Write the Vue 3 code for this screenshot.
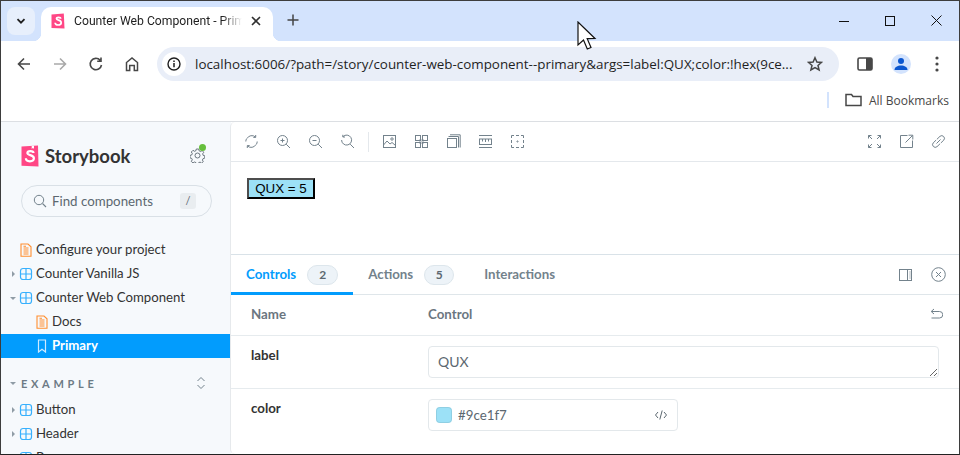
<script setup>
const zoomTools = [
  '<path d="M3 4.500A5.500 5.500 0 0 1 11.500 3M12 10.500A5.500 5.500 0 0 1 3.500 12M11.700 1v2.400H9.300M3.300 14v-2.400h2.400M1.800 7.500c0-1 .3-2 .8-2.800M13.200 7.500c0 1-.3 2-.8 2.800"/>',
  '<circle cx="6.500" cy="6.500" r="5"/><path d="M10.200 10.200 14 14M4.500 6.500h4M6.500 4.500v4"/>',
  '<circle cx="6.500" cy="6.500" r="5"/><path d="M10.200 10.200 14 14M4.500 6.500h4"/>',
  '<path d="M3 2.600A5 5 0 1 1 1.600 6M10.200 10.200 14 14M2.800 .8v2.200H5"/>',
]
const viewTools = [
  '<rect x="1.500" y="1.500" width="12" height="12"/><circle cx="10" cy="5" r="1.200"/><path d="M1.500 11 5 7l3 3 2-1.500 3.500 3"/>',
  '<rect x="1.500" y="1.500" width="5" height="5"/><rect x="8.500" y="1.500" width="5" height="5"/><rect x="1.500" y="8.500" width="5" height="5"/><rect x="8.500" y="8.500" width="5" height="5"/><rect x="5" y="5" width="5" height="5" fill="#73828c" fill-opacity=".35" stroke="none"/>',
  '<rect x="1.500" y="4.500" width="9" height="9"/><path d="M2.500 2.500h10v11M4 .8h10.200V13.500"/>',
  '<path d="M1 1.500h13M1 13.500h13"/><rect x="1.500" y="5" width="12" height="5.500"/><path d="M4.500 5v2.500M7.500 5v3M10.500 5v2.500"/>',
  '<path d="M1.500 4V1.500H4M11 1.500h2.500V4M13.500 11v2.500H11M4 13.500H1.500V11M6 1.500h3M6 13.500h3M1.500 6v3M13.500 6v3"/><circle cx="7.500" cy="7.500" r=".6"/>',
]
const rightTools = [
  '<path d="M1.500 1.500 5 5M13.500 1.500 10 5M1.500 13.500 5 10M13.500 13.500 10 10M1.500 4.500v-3h3M10.500 1.500h3v3M1.500 10.500v3h3M10.500 13.500h3v-3"/>',
  '<path d="M8.500 1.500h-7v12h12v-7M6.500 8.500l7-7M9.500 1.200h4.300v4.300"/>',
  '<path d="M6 5.200 9 2.300a2.700 2.700 0 0 1 3.800 3.800L9.800 9M9 9.800l-3 2.900a2.700 2.700 0 0 1-3.800-3.800L5.200 6M5.500 9.500l4-4"/>',
]
const topItems = [
  { name: 'Configure your project', kind: 'doc', depth: 0 },
  { name: 'Counter Vanilla JS', kind: 'comp', arrow: 'right', depth: 0 },
  { name: 'Counter Web Component', kind: 'comp', arrow: 'down', depth: 0 },
  { name: 'Docs', kind: 'doc', depth: 1 },
  { name: 'Primary', kind: 'story', depth: 1, selected: true },
]
const exampleItems = [
  { name: 'Button', kind: 'comp', arrow: 'right', depth: 0 },
  { name: 'Header', kind: 'comp', arrow: 'right', depth: 0 },
  { name: 'Page', kind: 'comp', arrow: 'right', depth: 0 },
]
</script>

<template>
  <div class="window">
    <div class="tabstrip">
      <button class="tab-search">
        <svg width="12" height="12" viewBox="0 0 12 12"><path d="M2.500 4.200 6 7.700l3.500-3.500" fill="none" stroke="#1f1f1f" stroke-width="1.800"/></svg>
      </button>
      <div class="tab">
        <svg class="favicon" width="14" height="16" viewBox="0 0 14 16">
          <path d="M.5 1.500 12.800.5 13.500 15.500.5 15z" fill="#ff4785"/>
          <path d="M9.700 5.800c0-1-.8-1.400-2.200-1.400-1.300 0-2 .5-2 1.300 0 1.900 4.700 1 4.700 4 0 1.500-1.300 2.300-3.100 2.300-1.700 0-3-.7-3-2.200" fill="none" stroke="#fff" stroke-width="1.700"/>
        </svg>
        <span class="tab-title">Counter Web Component - Primary</span>
        <svg class="tab-close" width="10" height="10" viewBox="0 0 10 10"><path d="M1 1l8 8M9 1 1 9" stroke="#303030" stroke-width="1.600"/></svg>
      </div>
      <svg class="new-tab" width="12" height="12" viewBox="0 0 12 12"><path d="M6 .5v11M.5 6h11" stroke="#444" stroke-width="1.500"/></svg>
      <div class="tabstrip-fill"></div>
      <div class="win-btn"><svg width="10" height="10" viewBox="0 0 10 10"><path d="M0 5.500h10" stroke="#111" /></svg></div>
      <div class="win-btn"><svg width="10" height="10" viewBox="0 0 10 10"><rect x=".5" y=".5" width="9" height="9" fill="none" stroke="#111"/></svg></div>
      <div class="win-btn"><svg width="11" height="11" viewBox="0 0 11 11"><path d="M.5.500l10 10M10.500.500l-10 10" stroke="#111"/></svg></div>
    </div>

    <div class="chrome-toolbar">
      <svg class="nav" width="16" height="16" viewBox="0 0 16 16"><path d="M14 8H2.500M8 2.500 2.500 8 8 13.500" fill="none" stroke="#474747" stroke-width="1.600"/></svg>
      <svg class="nav" width="16" height="16" viewBox="0 0 16 16"><path d="M2 8h11.500M8 2.500 13.500 8 8 13.500" fill="none" stroke="#a9a9a9" stroke-width="1.600"/></svg>
      <svg class="nav" width="16" height="16" viewBox="0 0 16 16"><path d="M13.500 9a5.700 5.700 0 1 1-1.300-4.700M13 1.500v3.800H9.200" fill="none" stroke="#474747" stroke-width="1.600"/></svg>
      <svg class="nav" width="16" height="16" viewBox="0 0 16 16"><path d="M2.500 14.500V6.500L8 2l5.500 4.500v8h-3.200V9.500H5.700v5z" fill="none" stroke="#474747" stroke-width="1.500"/></svg>
      <div class="omnibox">
        <div class="site-info">
          <svg width="14" height="14" viewBox="0 0 14 14"><circle cx="7" cy="7" r="6" fill="none" stroke="#1f1f1f" stroke-width="1.400"/><path d="M7 6v4.300M7 3.500v1.400" stroke="#1f1f1f" stroke-width="1.500"/></svg>
        </div>
        <span class="url">localhost:6006/?path=/story/counter-web-component--primary&amp;args=label:QUX;color:!hex(9ce...</span>
        <svg width="16" height="16" viewBox="0 0 16 16"><path d="M8 1.700 9.900 6l4.600.4-3.500 3 1.100 4.600L8 11.600 3.900 14 5 9.400l-3.500-3L6.100 6z" fill="none" stroke="#474747" stroke-width="1.500"/></svg>
      </div>
      <svg class="side-panel" width="16" height="14" viewBox="0 0 16 14"><rect x="1" y="1" width="14" height="12" rx="1.500" fill="none" stroke="#474747" stroke-width="1.600"/><rect x="9" y="1" width="6" height="12" fill="#474747"/></svg>
      <div class="avatar">
        <svg width="14" height="14" viewBox="0 0 14 14"><circle cx="7" cy="4" r="3" fill="#0b57d0"/><path d="M.5 13c0-3 3-4.500 6.500-4.500s6.500 1.500 6.500 4.500z" fill="#0b57d0"/></svg>
      </div>
      <svg class="kebab" width="4" height="16" viewBox="0 0 4 16"><circle cx="2" cy="2" r="1.600" fill="#474747"/><circle cx="2" cy="8" r="1.600" fill="#474747"/><circle cx="2" cy="14" r="1.600" fill="#474747"/></svg>
    </div>

    <div class="bookmarks">
      <div class="bm-sep"></div>
      <svg width="17" height="14" viewBox="0 0 17 14"><path d="M1 12.500V1.500h5.500l1.500 2h8v9z" fill="none" stroke="#474747" stroke-width="1.500"/></svg>
      <span class="bm-label">All Bookmarks</span>
    </div>

    <div class="storybook">
      <aside class="sidebar">
        <div class="brand">
          <svg width="18" height="22" viewBox="0 0 18 22">
            <path d="M.5 1.500 17 .5 17.500 21.500.5 20.800z" fill="#ff4785"/>
            <path d="M12.500 8c0-1.300-1.200-1.800-3.200-1.800-1.800 0-2.900.7-2.900 1.800 0 2.800 6.500 1.400 6.500 5.300 0 2-1.700 3-4 3-2.400 0-4-1-4-3" fill="none" stroke="#fff" stroke-width="2.200"/>
            <path d="M13 .8v3l-1.200-.8-1.100.9V1z" fill="#fff"/>
          </svg>
          <span class="brand-name">Storybook</span>
          <div class="gear">
            <svg width="15" height="15" viewBox="0 0 15 15"><path d="M6.300 1h2.400l.4 1.800 1.500.7 1.600-1 1.500 1.800-1 1.500.4 1.500 1.700.5v2.300l-1.700.5-.7 1.500.9 1.500-1.700 1.500-1.500-1-1.500.6-.4 1.600H6.300l-.4-1.700-1.400-.6-1.600 1-1.600-1.700 1-1.500-.6-1.400-1.700-.5V7.400l1.700-.4.600-1.500-1-1.500L3 2.300l1.500 1 1.400-.6zM7.500 5a2.500 2.500 0 1 0 0 5 2.500 2.500 0 0 0 0-5z" fill="none" stroke="#5c6870" stroke-width=".9"/></svg>
            <span class="status-dot"></span>
          </div>
        </div>

        <div class="search">
          <svg width="14" height="14" viewBox="0 0 14 14"><circle cx="6" cy="6" r="4.700" fill="none" stroke="#73828c"/><path d="M9.500 9.500 13 13" stroke="#73828c" stroke-width="1.100"/></svg>
          <span class="search-text">Find components</span>
          <span class="search-key">/</span>
        </div>

        <div class="tree top-tree">
          <div v-for="item in topItems" :key="item.name" :class="['row', { selected: item.selected, nested: item.depth }]">
            <span class="caret">
              <span v-if="item.arrow" :class="['arrow', item.arrow]"></span>
            </span>
            <svg v-if="item.kind === 'doc'" width="14" height="14" viewBox="0 0 14 14"><path d="M2 1h7l3 2.800v9.400H2zM4.500 5h5M4.500 7h5M4.500 9h5M4.500 11h5M4.500 3.200h2.500" fill="none" stroke="#ff8e2e" stroke-width="1.100"/></svg>
            <svg v-else-if="item.kind === 'comp'" width="14" height="14" viewBox="0 0 14 14"><rect x="1.500" y="1.500" width="11" height="11" rx="2.500" fill="none" stroke="#37b0fd" stroke-width="1.200"/><path d="M7 1.500v11M1.500 7h11" stroke="#37b0fd" stroke-width="1.200"/></svg>
            <svg v-else width="14" height="14" viewBox="0 0 14 14"><path d="M3.500 1h7v12L7 10.200 3.500 13z" fill="none" stroke="#cfeaff" stroke-width="1.200"/></svg>
            <span class="row-name">{{ item.name }}</span>
          </div>
        </div>

        <div class="section-head">
          <span class="arrow down"></span>
          <span class="section-title">EXAMPLE</span>
          <svg width="10" height="14" viewBox="0 0 10 14"><path d="M1.500 5 5 1.500 8.500 5M1.500 9 5 12.500 8.500 9" fill="none" stroke="#73828c"/></svg>
        </div>

        <div class="tree">
          <div v-for="item in exampleItems" :key="item.name" class="row">
            <span class="caret"><span class="arrow right"></span></span>
            <svg width="14" height="14" viewBox="0 0 14 14"><rect x="1.500" y="1.500" width="11" height="11" rx="2.500" fill="none" stroke="#37b0fd" stroke-width="1.200"/><path d="M7 1.500v11M1.500 7h11" stroke="#37b0fd" stroke-width="1.200"/></svg>
            <span class="row-name">{{ item.name }}</span>
          </div>
        </div>
      </aside>

      <main class="main">
        <div class="sb-toolbar">
          <svg v-for="(icon, i) in zoomTools" :key="i" class="tool" width="15" height="15" viewBox="0 0 15 15" v-html="icon"></svg>
          <span class="tool-sep"></span>
          <svg v-for="(icon, i) in viewTools" :key="'v' + i" class="tool" width="15" height="15" viewBox="0 0 15 15" v-html="icon"></svg>
          <span class="toolbar-fill"></span>
          <svg v-for="(icon, i) in rightTools" :key="'r' + i" class="tool" width="15" height="15" viewBox="0 0 15 15" v-html="icon"></svg>
        </div>

        <div class="preview">
          <button class="counter">QUX = 5</button>
        </div>

        <div class="panel">
          <div class="panel-tabs">
            <div class="ptab active"><span class="ptab-name">Controls</span> <span class="count">2</span></div>
            <div class="ptab"><span class="ptab-name">Actions</span> <span class="count">5</span></div>
            <div class="ptab"><span class="ptab-name">Interactions</span></div>
            <span class="toolbar-fill"></span>
            <svg class="panel-icon" width="14" height="14" viewBox="0 0 14 14"><rect x=".5" y="1.500" width="12" height="11" fill="none" stroke="#73828c"/><path d="M8.500 1.500v11M10.500 4h1M10.500 6h1M10.500 8h1M10.500 10h1" stroke="#73828c"/></svg>
            <svg class="panel-icon close" width="15" height="15" viewBox="0 0 15 15"><circle cx="7.500" cy="7.500" r="6.800" fill="none" stroke="#73828c"/><path d="M5 5l5 5M10 5l-5 5" stroke="#73828c"/></svg>
          </div>

          <div class="args-row head">
            <span class="col-name">Name</span>
            <span class="col-control">Control</span>
            <svg class="reset" width="13" height="13" viewBox="0 0 13 13"><path d="M4 1 1.200 3.500 4 6M1.500 3.500h8a2.800 2.800 0 0 1 0 6.500H1.500" fill="none" stroke="#73828c"/></svg>
          </div>
          <div class="args-row text-row">
            <span class="col-name">label</span>
            <div class="col-control"><div class="text-input">QUX</div></div>
          </div>
          <div class="args-row color-row">
            <span class="col-name">color</span>
            <div class="col-control">
              <div class="color-input">
                <span class="swatch"></span>
                <span class="color-value">#9ce1f7</span>
                <svg width="14" height="14" viewBox="0 0 14 14"><path d="M4 4 1.500 7 4 10M10 4l2.500 3L10 10M8.200 2.500l-2.400 9" fill="none" stroke="#5c6870"/></svg>
              </div>
            </div>
          </div>
        </div>
      </main>
    </div>

    <svg class="cursor" width="20" height="29" viewBox="0 0 20 29"><path d="M1 1v23l5.500-5 3.800 9 3.700-1.500-3.800-8.800 7.800-.2z" fill="#fff" stroke="#111" stroke-width="1.200"/></svg>
  </div>
</template>

<style scoped>
.window {
  position: relative;
  width: 960px;
  height: 455px;
  box-sizing: border-box;
  border: 1px solid #3d3d3d;
  border-bottom-color: #222;
  background: #fff;
  overflow: hidden;
  display: flex;
  flex-direction: column;
  font-family: "Open Sans", "Noto Sans", sans-serif;
}

/* browser chrome */
.tabstrip {
  height: 40px;
  flex: none;
  background: #d3e3fd;
  display: flex;
  align-items: flex-end;
  padding-left: 6px;
}

.tab-search {
  width: 28px;
  height: 28px;
  margin-bottom: 6px;
  border: none;
  padding: 0;
  border-radius: 8px;
  background: #e7effc;
  display: flex;
  align-items: center;
  justify-content: center;
}

.tab {
  position: relative;
  width: 232px;
  height: 34px;
  margin-left: 6px;
  background: #fff;
  border-radius: 10px 10px 0 0;
  display: flex;
  align-items: center;
  padding: 0 0 6px 10px;
  box-sizing: border-box;
}

.tab::before,
.tab::after {
  content: "";
  position: absolute;
  bottom: 0;
  width: 8px;
  height: 8px;
}

.tab::before {
  left: -8px;
  background: radial-gradient(circle at 0 0, transparent 8px, #fff 8.500px);
}

.tab::after {
  right: -8px;
  background: radial-gradient(circle at 100% 0, transparent 8px, #fff 8.500px);
}

.favicon {
  flex: none;
}

.tab-title {
  margin-left: 9px;
  width: 168px;
  flex: none;
  white-space: nowrap;
  overflow: hidden;
  font-family: Roboto, "Open Sans", sans-serif;
  font-size: 12.200px;
  color: #1f1f1f;
  -webkit-mask-image: linear-gradient(to right, #000 88%, transparent);
  mask-image: linear-gradient(to right, #000 88%, transparent);
}

.tab-close {
  margin-left: 9px;
}

.new-tab {
  margin: 0 0 15px 14px;
}

.tabstrip-fill,
.toolbar-fill {
  flex: 1;
}

.win-btn {
  width: 46px;
  height: 39px;
  display: flex;
  align-items: center;
  justify-content: center;
  margin-bottom: 1px;
}

.chrome-toolbar {
  height: 46px;
  flex: none;
  background: #fff;
  border-radius: 8px 8px 0 0;
  display: flex;
  align-items: center;
  padding: 0 0 0 15px;
  box-sizing: border-box;
}

.nav {
  margin-right: 20px;
  flex: none;
}

.nav:nth-child(4) {
  margin-right: 18px;
}

.omnibox {
  width: 682px;
  height: 34px;
  margin-left: -1px;
  background: #e9eef8;
  border-radius: 17px;
  display: flex;
  align-items: center;
  padding: 0 16px 0 5px;
  box-sizing: border-box;
  flex: none;
}

.site-info {
  width: 24px;
  height: 24px;
  border-radius: 50%;
  background: #fff;
  display: flex;
  align-items: center;
  justify-content: center;
  flex: none;
}

.url {
  margin-left: 9px;
  flex: 1;
  font-size: 13.400px;
  color: #1f1f1f;
  white-space: nowrap;
  overflow: hidden;
}

.side-panel {
  margin-left: 18px;
}

.avatar {
  width: 20px;
  height: 20px;
  margin-left: 18px;
  border-radius: 50%;
  background: #d3e3fd;
  display: flex;
  align-items: center;
  justify-content: center;
}

.kebab {
  margin-left: 24px;
}

.bookmarks {
  height: 34px;
  flex: none;
  background: #fff;
  display: flex;
  align-items: center;
  padding: 0 0 8px 826px;
  box-sizing: border-box;
}

.bm-sep {
  width: 2px;
  height: 16px;
  background: #d3e3fd;
  margin-right: 16px;
}

.bm-label {
  margin-left: 7px;
  font-size: 12px;
  color: #474747;
  white-space: nowrap;
}

/* storybook */
.storybook {
  flex: 1;
  min-height: 0;
  display: flex;
  border-top: 1px solid #dcdfe3;
  font-family: Lato, "Noto Sans", sans-serif;
}

.sidebar {
  width: 230px;
  flex: none;
  background: #f6f9fc;
  overflow: hidden;
}

.brand {
  height: 22px;
  margin-top: 23px;
  padding: 0 26px 0 20px;
  display: flex;
  align-items: center;
}

.brand-name {
  margin-left: 6px;
  flex: 1;
  font-size: 18.500px;
  font-weight: 700;
  color: #333;
}

.gear {
  position: relative;
  width: 15px;
  height: 15px;
  margin-top: -3px;
}

.status-dot {
  position: absolute;
  top: -3px;
  right: -1px;
  width: 7px;
  height: 7px;
  border-radius: 50%;
  background: #66bf3c;
}

.search {
  height: 32px;
  margin: 18px 19px 0 20px;
  padding: 0 15px 0 11px;
  border: 1px solid #d9e0e6;
  border-radius: 16px;
  display: flex;
  align-items: center;
  box-sizing: border-box;
}

.search-text {
  margin-left: 5px;
  flex: 1;
  font-size: 13.300px;
  color: #5c6870;
  padding-bottom: 1px;
}

.search-key {
  width: 16px;
  height: 16px;
  border-radius: 3px;
  background: #e9edf0;
  color: #5c6870;
  font-size: 11px;
  line-height: 16px;
  text-align: center;
}

.top-tree {
  margin-top: 21px;
}

.row {
  height: 24px;
  display: flex;
  align-items: center;
  padding-left: 7px;
  font-size: 13.200px;
  color: #333;
  white-space: nowrap;
}

.row.nested {
  padding-left: 23px;
}

.row.selected {
  background: #029cfd;
  color: #fff;
  font-weight: 700;
}

.caret {
  width: 10px;
  display: flex;
  justify-content: center;
  flex: none;
}

.row svg {
  margin-left: 1px;
  flex: none;
}

.row-name {
  margin-left: 3px;
  padding-bottom: 2px;
}

.arrow {
  display: block;
  width: 0;
  height: 0;
}

.arrow.right {
  border-left: 3px solid #8f9ca5;
  border-top: 3px solid transparent;
  border-bottom: 3px solid transparent;
}

.arrow.down {
  border-top: 3px solid #8f9ca5;
  border-left: 3px solid transparent;
  border-right: 3px solid transparent;
}

.section-head {
  height: 24px;
  margin: 13px 0 3px;
  padding: 0 25px 0 9px;
  display: flex;
  align-items: center;
}

.section-title {
  flex: 1;
  margin-left: 5px;
  font-size: 11px;
  font-weight: 700;
  letter-spacing: 3.700px;
  color: #6d7b85;
}

.main {
  flex: 1;
  min-width: 0;
  display: flex;
  flex-direction: column;
  border-left: 1px solid #e6e9ec;
  border-radius: 5px 0 0 5px;
  background: #fff;
  margin-left: -1px;
  box-sizing: border-box;
}

.sb-toolbar {
  height: 40px;
  flex: none;
  border-bottom: 1px solid #e4e8ec;
  box-sizing: border-box;
  display: flex;
  align-items: center;
  padding: 0 13px 0 13px;
  gap: 17px;
}

.tool {
  flex: none;
  fill: none;
  stroke: #73828c;
  stroke-width: 1;
}

.tool-sep {
  width: 1px;
  height: 20px;
  background: #e4e8ec;
  margin: 0 -4px;
}

.preview {
  height: 92px;
  flex: none;
  padding: 16px;
  box-sizing: border-box;
}

.counter {
  display: block;
  width: 68px;
  height: 21px;
  padding: 0;
  background: #9ce1f7;
  border: 2px solid;
  border-color: #4d4d4d #000 #000 #4d4d4d;
  font-family: "Liberation Sans", Arial, sans-serif;
  font-size: 13.333px;
  color: #000;
}

.panel {
  flex: 1;
  min-height: 0;
  border-top: 1px solid #d9e2e8;
  display: flex;
  flex-direction: column;
}

.panel-tabs {
  height: 40px;
  flex: none;
  border-bottom: 1px solid #dfe6ea;
  box-sizing: border-box;
  display: flex;
  align-items: stretch;
}

.ptab {
  display: flex;
  align-items: center;
  padding: 0 15px;
  font-size: 13.300px;
  font-weight: 700;
  color: #73828c;
  white-space: nowrap;
  position: relative;
}

.ptab-name {
  padding-bottom: 2px;
}

.ptab.active {
  color: #029cfd;
}

.ptab.active::after {
  content: "";
  position: absolute;
  left: 0;
  right: 0;
  bottom: -1px;
  height: 3px;
  background: #029cfd;
}

.count {
  margin-left: 11px;
  min-width: 30px;
  height: 20px;
  line-height: 18px;
  box-sizing: border-box;
  border: 1px solid #dde6ec;
  border-radius: 10px;
  background: #edf3f8;
  color: #5c6870;
  font-size: 12px;
  text-align: center;
}

.ptab.active .count {
  min-width: 31px;
}

.panel-icon {
  align-self: center;
  margin-right: 18px;
}

.panel-icon.close {
  margin-right: 13px;
}

.args-row {
  display: flex;
  padding: 0 20px 0 20px;
  border-bottom: 1px solid #e6ebee;
  box-sizing: border-box;
  font-size: 13.300px;
  color: #333;
}

.col-name {
  width: 177px;
  flex: none;
  font-weight: 700;
}

.col-control {
  flex: 1;
}

.head {
  height: 41px;
  align-items: center;
  color: #6b7680;
  padding-bottom: 2px;
}

.head .col-control {
  font-weight: 700;
}

.reset {
  margin-right: -4px;
}

.text-row {
  height: 53px;
  padding-top: 10px;
}

.text-row .col-name,
.color-row .col-name {
  padding-top: 1px;
}

.text-input {
  height: 32px;
  box-sizing: border-box;
  border: 1px solid #e3e8eb;
  border-radius: 4px;
  padding: 6px 9px;
  color: #5c6870;
  font-size: 14px;
  line-height: 18px;
  overflow: auto;
  resize: both;
}

.color-row {
  flex: 1;
  padding-top: 10px;
  border-bottom: none;
}

.color-input {
  width: 250px;
  height: 32px;
  box-sizing: border-box;
  border: 1px solid #e3e8eb;
  border-radius: 4px;
  padding: 0 9px 0 7px;
  display: flex;
  align-items: center;
}

.swatch {
  width: 16px;
  height: 16px;
  border-radius: 4px;
  background: #9ce1f7;
  box-shadow: inset 0 0 0 1px rgba(0, 0, 0, 0.08);
}

.color-value {
  flex: 1;
  margin-left: 6px;
  font-size: 13.300px;
  color: #5c6870;
  padding-bottom: 1px;
}

.cursor {
  position: absolute;
  left: 576px;
  top: 20px;
}
</style>
